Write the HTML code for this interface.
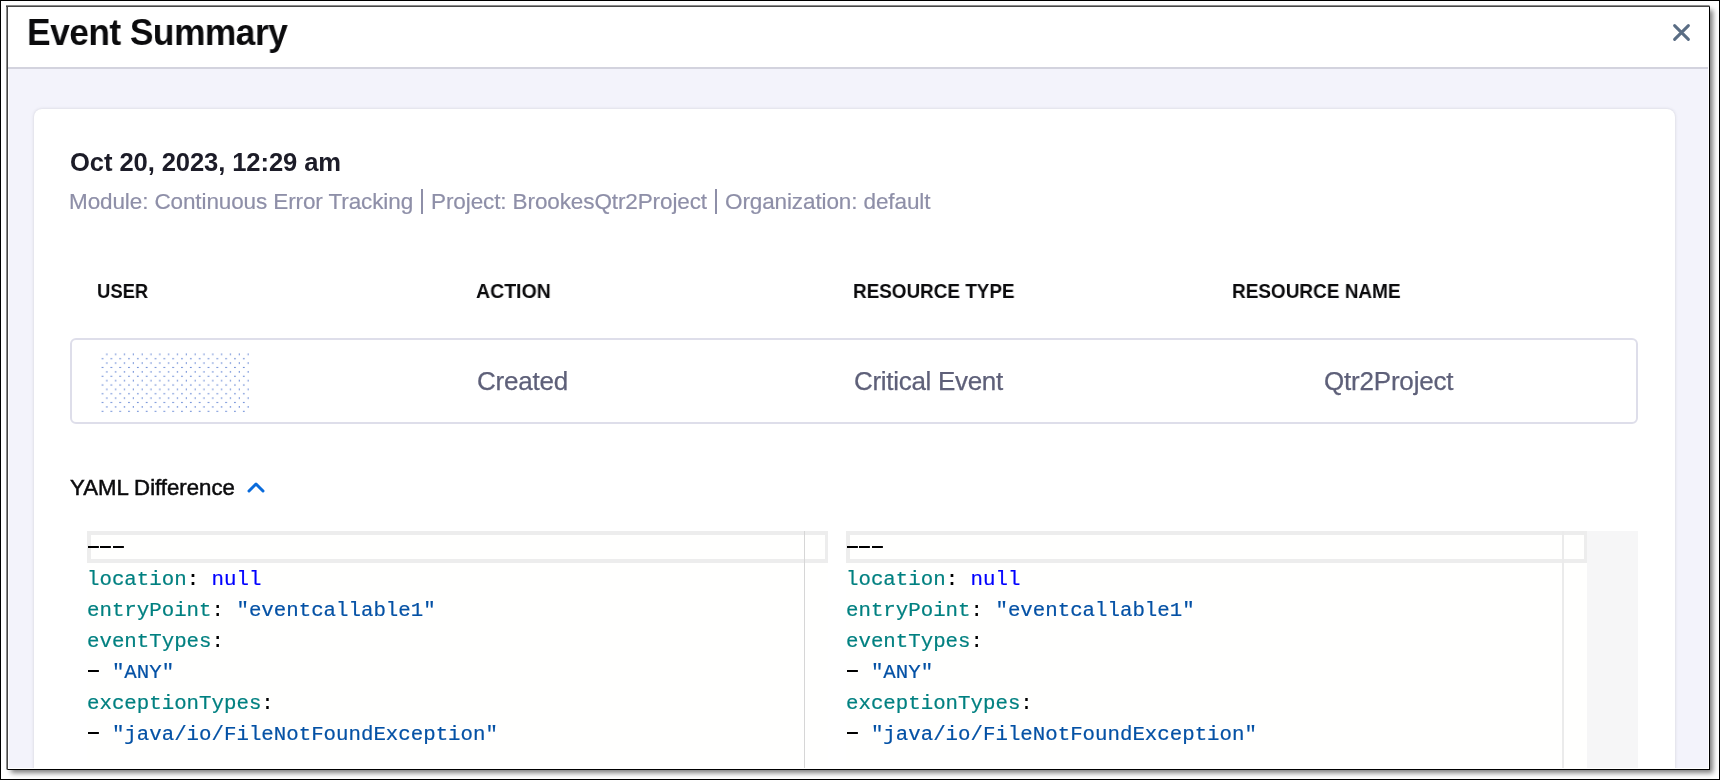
<!DOCTYPE html>
<html>
<head>
<meta charset="utf-8">
<style>
*{margin:0;padding:0;box-sizing:border-box}
html,body{width:1720px;height:780px;overflow:hidden;background:#fff;position:relative;font-family:"Liberation Sans",sans-serif;-webkit-font-smoothing:antialiased}
.abs{position:absolute}
#frame{left:0;top:0;width:1720px;height:780px;border:1px solid #000}
#win{left:6px;top:5px;width:1704px;height:765px;border-left:2px solid transparent;border-top:2px solid transparent;border-right:1px solid #000;border-bottom:1px solid #000;background:#fff;box-shadow:4px 4px 5px -1px rgba(0,0,0,.5)}
#bl{left:6px;top:5px;width:2px;height:764px;background:linear-gradient(90deg,#8a8a8a 50%,#464646 50%)}
#bt{left:6px;top:5px;width:1703px;height:2px;background:linear-gradient(#8a8a8a 50%,#464646 50%)}
#inner{left:8px;top:7px;width:1700px;height:761px;overflow:hidden;background:#fff}
#hdrline{left:0;top:60px;width:1700px;height:2px;background:#d3d3de}
#content{left:1px;top:62px;width:1699px;height:699px;background:#f3f3fb}
#card{left:25.5px;top:101.5px;width:1641px;height:700px;background:#fff;border-radius:8px;box-shadow:0 0 3px rgba(96,97,112,.25);transform:translate(0,0)}
.t{position:absolute;white-space:pre;line-height:1;will-change:transform}
#ed{left:79px;top:524px;width:1551px;height:240px;background:#fff}
.pane{height:240px;background:#fffffe}
.clb{height:32px;border:4px solid #ededed;border-right-width:3px}
.code{will-change:transform;font-family:"Liberation Mono",monospace;font-size:20.75px;line-height:31px;color:#000;white-space:pre;padding-top:1.6px;-webkit-text-stroke:0.2px currentColor}
.d{color:transparent;-webkit-text-stroke:0;background:linear-gradient(#000,#000) no-repeat 0.8px 9px/10.9px 2px}
.pp{color:transparent;-webkit-text-stroke:0;background:linear-gradient(#8e8fa8,#8e8fa8) no-repeat 1.6px 0/2.2px 100%}
.ty{color:#008080}.kw{color:#0000ff}.s{color:#0451a5}
</style>
</head>
<body>
<div class="abs" id="frame"></div>
<div class="abs" id="win"></div>
<div class="abs" id="bl"></div>
<div class="abs" id="bt"></div>
<div class="abs" id="inner">
<div class="abs" id="hdrline"></div>
<div class="abs" id="content"></div>
<div class="abs" id="card"></div>

<div class="t" id="title" style="left:19px;top:6.8px;font-size:37px;letter-spacing:-0.55px;transform:scaleX(0.955);transform-origin:0 0;font-weight:bold;color:#0b0b0d">Event Summary</div>
<svg class="abs" style="left:1662px;top:14px" width="22" height="22" viewBox="0 0 22 22"><path d="M4.6 4.6L18.4 18.4M18.4 4.6L4.6 18.4" stroke="#5a6d84" stroke-width="3" stroke-linecap="round"/></svg>

<div class="t" id="date" style="left:62px;top:143px;font-size:25.6px;letter-spacing:-0.1px;font-weight:bold;color:#1c1c28">Oct 20, 2023, 12:29 am</div>
<div class="t" id="sub" style="left:61.2px;top:184.1px;font-size:22.5px;letter-spacing:-0.11px;-webkit-text-stroke:0.2px #8e8fa8;color:#8e8fa8">Module: Continuous Error Tracking <span class="pp">|</span> Project: BrookesQtr2Project <span class="pp">|</span> Organization: default</div>

<div class="t hd" style="left:89.4px;top:274px;font-size:20px;transform:scaleX(0.922);transform-origin:0 0;font-weight:bold;color:#0b0b0d">USER</div>
<div class="t hd" style="left:468px;top:274px;font-size:20px;transform:scaleX(0.975);transform-origin:0 0;font-weight:bold;color:#0b0b0d">ACTION</div>
<div class="t hd" style="left:845.3px;top:274px;font-size:20px;transform:scaleX(0.944);transform-origin:0 0;font-weight:bold;color:#0b0b0d">RESOURCE TYPE</div>
<div class="t hd" style="left:1223.85px;top:274px;font-size:20px;transform:scaleX(0.948);transform-origin:0 0;font-weight:bold;color:#0b0b0d">RESOURCE NAME</div>

<div class="abs" id="row" style="left:62px;top:331px;width:1568px;height:86px;border:2px solid #dedeea;border-radius:6px"></div>
<svg class="abs" id="dots" style="left:90px;top:343px" width="152" height="64">
  <defs><pattern id="dp" x="4.6" y="4.4" width="8.83" height="8.76" patternUnits="userSpaceOnUse">
    <rect x="3.7" y="-0.6" width="1.1" height="1.1" fill="#1a4cc0"/>
    <rect x="-0.6" y="3.8" width="1.1" height="1.1" fill="#1a4cc0"/>
    <rect x="8.2" y="3.8" width="1.1" height="1.1" fill="#1a4cc0"/>
    <rect x="3.7" y="8.16" width="1.1" height="1.1" fill="#1a4cc0"/>
  </pattern></defs>
  <rect x="3" y="3" width="148" height="60" fill="url(#dp)"/>
</svg>
<div class="t" style="left:468.6px;top:360.5px;font-size:26px;letter-spacing:-0.2px;color:#5e6079;-webkit-text-stroke:0.25px #5e6079">Created</div>
<div class="t" style="left:846.2px;top:360.5px;font-size:26px;letter-spacing:-0.3px;color:#5e6079;-webkit-text-stroke:0.25px #5e6079">Critical Event</div>
<div class="t" style="left:1316.2px;top:360.5px;font-size:26px;letter-spacing:-0.2px;color:#5e6079;-webkit-text-stroke:0.25px #5e6079">Qtr2Project</div>

<div class="t" id="yaml" style="left:62px;top:470.2px;font-size:22.2px;color:#0b0b0d;-webkit-text-stroke:0.5px #0b0b0d">YAML Difference</div>
<svg class="abs" style="left:237px;top:473px" width="22" height="16" viewBox="0 0 22 16"><path d="M4 11L11 4L18 11" fill="none" stroke="#0a6bdb" stroke-width="3" stroke-linecap="round" stroke-linejoin="round"/></svg>

<div class="abs" id="ed">
  <div class="abs pane" style="left:0;top:0;width:741px"></div>
  <div class="abs clb" style="left:0;top:0;width:741px"></div>
  <div class="abs" style="left:717px;top:0;width:1px;height:240px;background:#d6d6d6"></div>
  <div class="abs code" style="left:0px;top:0"><div><span class="d">-</span><span class="d">-</span><span class="d">-</span></div><div><span class="ty">location</span>: <span class="kw">null</span></div><div><span class="ty">entryPoint</span>: <span class="s">"eventcallable1"</span></div><div><span class="ty">eventTypes</span>:</div><div><span class="d">-</span> <span class="s">"ANY"</span></div><div><span class="ty">exceptionTypes</span>:</div><div><span class="d">-</span> <span class="s">"java/io/FileNotFoundException"</span></div></div>
  <div class="abs pane" style="left:759px;top:0;width:741px"></div>
  <div class="abs clb" style="left:759px;top:0;width:741px"></div>
  <div class="abs" style="left:1475px;top:0;width:2px;height:240px;background:#ebebeb"></div>
  <div class="abs code" style="left:758.5px;top:0"><div><span class="d">-</span><span class="d">-</span><span class="d">-</span></div><div><span class="ty">location</span>: <span class="kw">null</span></div><div><span class="ty">entryPoint</span>: <span class="s">"eventcallable1"</span></div><div><span class="ty">eventTypes</span>:</div><div><span class="d">-</span> <span class="s">"ANY"</span></div><div><span class="ty">exceptionTypes</span>:</div><div><span class="d">-</span> <span class="s">"java/io/FileNotFoundException"</span></div></div>
  <div class="abs" style="left:1500px;top:0;width:51px;height:240px;background:#f6f6f7"></div>
</div>
</div>
</body>
</html>
